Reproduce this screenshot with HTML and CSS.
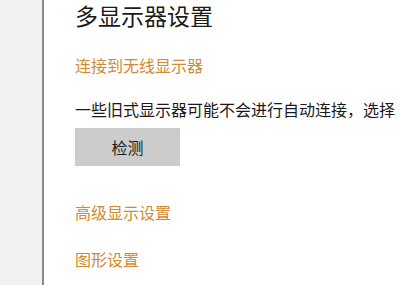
FILE: index.html
```html
<!DOCTYPE html>
<html lang="zh-CN">
<head>
<meta charset="utf-8">
<title>多显示器设置</title>
<link rel="stylesheet" href="styles.css">
</head>
<body>
<div class="window">
  <aside class="sidebar"></aside>
  <main class="content">
    <h1 class="title">多显示器设置</h1>
    <a class="link link-first" href="#">连接到无线显示器</a>
    <p class="desc">一些旧式显示器可能不会进行自动连接，选择“检测”尝试手动连接。</p>
    <button class="btn" type="button">检测</button>
    <a class="link link-advanced" href="#">高级显示设置</a>
    <a class="link link-graphics" href="#">图形设置</a>
  </main>
</div>
</body>
</html>
```
FILE: styles.css
```css
html, body {
  margin: 0;
  padding: 0;
  background: #ffffff;
  overflow: hidden;
}
body {
  font-family: "Noto Sans CJK SC", "Noto Sans", sans-serif;
  color: #1a1a1a;
}
.window {
  display: flex;
  width: 400px;
  height: 285px;
  overflow: hidden;
}
.sidebar {
  flex: 0 0 42px;
  background: #f2f2f2;
  border-right: 2px solid #8a8a8a;
}
.content {
  flex: 1 1 auto;
  min-width: 0;
  display: flex;
  flex-direction: column;
  align-items: flex-start;
  padding-left: 31px;
  white-space: nowrap;
}
.title {
  margin: 0;
  font-size: 23px;
  font-weight: normal;
  line-height: 30px;
  color: #1a1a1a;
}
.link {
  display: block;
  font-size: 16px;
  line-height: 22px;
  color: #d08b33;
  text-decoration: none;
}
.link-first { margin-top: 24px; }
.desc {
  margin: 22px 0 0;
  font-size: 16px;
  line-height: 22px;
  color: #1a1a1a;
}
.btn {
  margin-top: 8px;
  width: 105px;
  height: 38px;
  border: none;
  background: #cccccc;
  font-family: inherit;
  font-size: 16px;
  color: #1a1a1a;
  padding: 0;
}
.link-advanced { margin-top: 35px; }
.link-graphics { margin-top: 25px; }
```
